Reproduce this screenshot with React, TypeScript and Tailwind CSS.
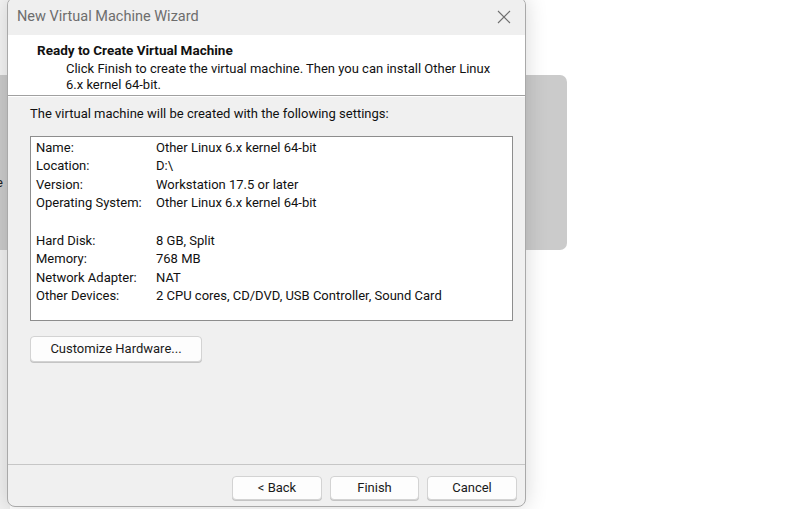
import React from "react";

const settings: [string, string][] = [
  ["Name:", "Other Linux 6.x kernel 64-bit"],
  ["Location:", "D:\\"],
  ["Version:", "Workstation 17.5 or later"],
  ["Operating System:", "Other Linux 6.x kernel 64-bit"],
  ["", ""],
  ["Hard Disk:", "8 GB, Split"],
  ["Memory:", "768 MB"],
  ["Network Adapter:", "NAT"],
  ["Other Devices:", "2 CPU cores, CD/DVD, USB Controller, Sound Card"],
];

function WinButton({ label, className }: { label: string; className: string }) {
  return (
    <button
      className={
        "flex items-center justify-center rounded-[4px] border border-[#d3d3d3] bg-[#fdfdfd] text-[13px] text-[#1a1a1a] shadow-[0_1px_0_#c4c4c4] " +
        className
      }
    >
      {label}
    </button>
  );
}

export default function App() {
  return (
    <div
      className="relative w-[800px] h-[509px] overflow-hidden bg-white"
      style={{ fontFamily: 'Roboto, "Noto Sans", sans-serif' }}
    >
      {/* desktop behind the wizard */}
      <div className="absolute left-0 top-0 w-[10px] h-[75px] bg-[#f4f4f4]" />
      <div className="absolute left-0 top-[75px] w-[567px] h-[175px] rounded-r-[7px] bg-[#cbcbcb]">
        <span className="absolute left-[-4px] top-[98px] text-[13px] text-[#222]">e</span>
      </div>
      <div className="absolute left-0 top-[250px] w-[10px] h-[259px] bg-[#f1f1f1]" />

      {/* wizard window */}
      <div className="absolute left-[7px] top-[-3px] w-[519px] h-[510px] flex flex-col overflow-hidden rounded-[8px] border border-[#a9a9a9] bg-[#f0f0f0] shadow-[0_0_22px_rgba(0,0,0,0.16)]">
        <div className="h-[37px] shrink-0 flex items-center justify-between pl-[9px] pr-[12px] pt-[1px] bg-[#efefef]">
          <span className="text-[14.5px] text-[#6d6d6d]">New Virtual Machine Wizard</span>
          <svg width="16" height="16" viewBox="0 0 16 16" className="mr-[1px]">
            <path d="M2 2L14 14M14 2L2 14" stroke="#6f6f6f" strokeWidth="1.1" fill="none" />
          </svg>
        </div>

        <div className="h-[61px] shrink-0 bg-white border-b border-[#a0a0a0] pl-[29px] pt-[6px]">
          <div className="text-[13.5px] font-bold text-[#111] leading-[19px]">Ready to Create Virtual Machine</div>
          <div className="pl-[29px] pt-[1px] text-[13px] text-[#111] leading-[15.5px] whitespace-nowrap">
            Click Finish to create the virtual machine. Then you can install Other Linux
            <br />
            6.x kernel 64-bit.
          </div>
        </div>

        <div className="flex-1 flex flex-col border-t border-white px-[22px] pt-[7px]">
          <div className="text-[13px] text-[#111] leading-[19px]">
            The virtual machine will be created with the following settings:
          </div>
          <div className="mt-[13px] w-[483px] h-[185px] border border-[#8d8d8d] bg-white pl-[5px] pt-[1px]">
            {settings.map(([k, v], i) => (
              <div key={i} className="flex h-[18.6px] items-center text-[13px] text-[#111]">
                <span className="w-[120px] shrink-0">{k}</span>
                <span>{v}</span>
              </div>
            ))}
          </div>
          <WinButton label="Customize Hardware..." className="mt-[15px] w-[172px] h-[26px]" />
        </div>

        <div className="h-[42px] shrink-0 border-t border-[#c6c6c6] flex justify-end gap-[8px] pr-[8px] pt-[11px]">
          <WinButton label="< Back" className="w-[90px] h-[24px]" />
          <WinButton label="Finish" className="w-[89px] h-[24px]" />
          <WinButton label="Cancel" className="w-[90px] h-[24px]" />
        </div>
      </div>
    </div>
  );
}
